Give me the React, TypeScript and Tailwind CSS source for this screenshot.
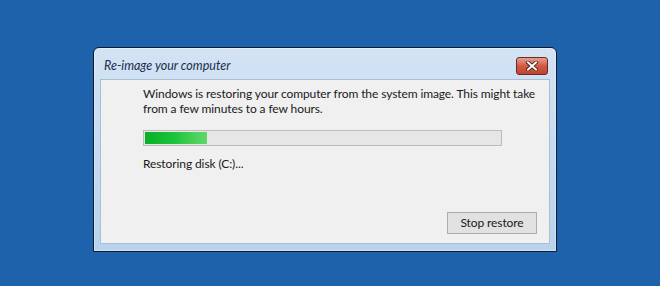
export default function App() {
  return (
    <div
      className="w-[660px] h-[286px] bg-[#1e62ab] pt-[47px] pl-[93px]"
      style={{ fontFamily: '"Segoe UI", Lato, "Noto Sans", sans-serif' }}
    >
      <div className="w-[464px] h-[205px] rounded-t-[6px] border border-[#0b1a33] bg-gradient-to-b from-[#d3e3f4] to-[#b9d2ec] shadow-[0_0_0_1px_rgba(255,255,255,0.35)_inset] flex flex-col">
        <div className="h-[31px] flex items-start justify-between pl-[10px] pr-[8px]">
          <span className="mt-[12px] text-[12.5px] italic leading-none text-[#1b2d4c]">Re-image your computer</span>
          <button className="mt-[9px] w-[32px] h-[18px] rounded-[3px] border border-[#6b2a22] bg-gradient-to-b from-[#e59e8e] via-[#cf5a43] to-[#c0442d] flex items-center justify-center">
            <svg width="12" height="10" viewBox="0 0 12 10">
              <path d="M2 1.5 L10 8.5 M10 1.5 L2 8.5" stroke="#3a1410" strokeWidth="3.6" strokeLinecap="square" />
              <path d="M2 1.5 L10 8.5 M10 1.5 L2 8.5" stroke="#ffffff" strokeWidth="2" strokeLinecap="square" />
            </svg>
          </button>
        </div>
        <div className="mx-[6px] mb-[7px] flex-1 bg-[#f0f0f0] border border-[#a9bfd6] flex flex-col pl-[42px] pr-[4px] text-[12px] tracking-[-0.1px] text-[#1a1a1a]">
          <p className="mt-[6px] leading-[15px]">
            Windows is restoring your computer from the system image. This might take from a few minutes to a few hours.
          </p>
          <div className="mt-[14px] h-[16px] w-[359px] border border-[#bcbcbc] bg-[#e6e6e6] p-px">
            <div className="h-full w-[62px] bg-gradient-to-r from-[#06b025] via-[#1cc43c] to-[#5ed86c]" />
          </div>
          <p className="mt-[10px] leading-[15px]">Restoring disk (C:)...</p>
          <div className="flex-1" />
          <div className="flex justify-end mb-[9px] mr-[8px]">
            <button className="w-[90px] h-[22px] border border-[#adadad] bg-[#e1e1e1] text-[12px] text-[#1a1a1a] leading-none">
              Stop restore
            </button>
          </div>
        </div>
      </div>
    </div>
  );
}
